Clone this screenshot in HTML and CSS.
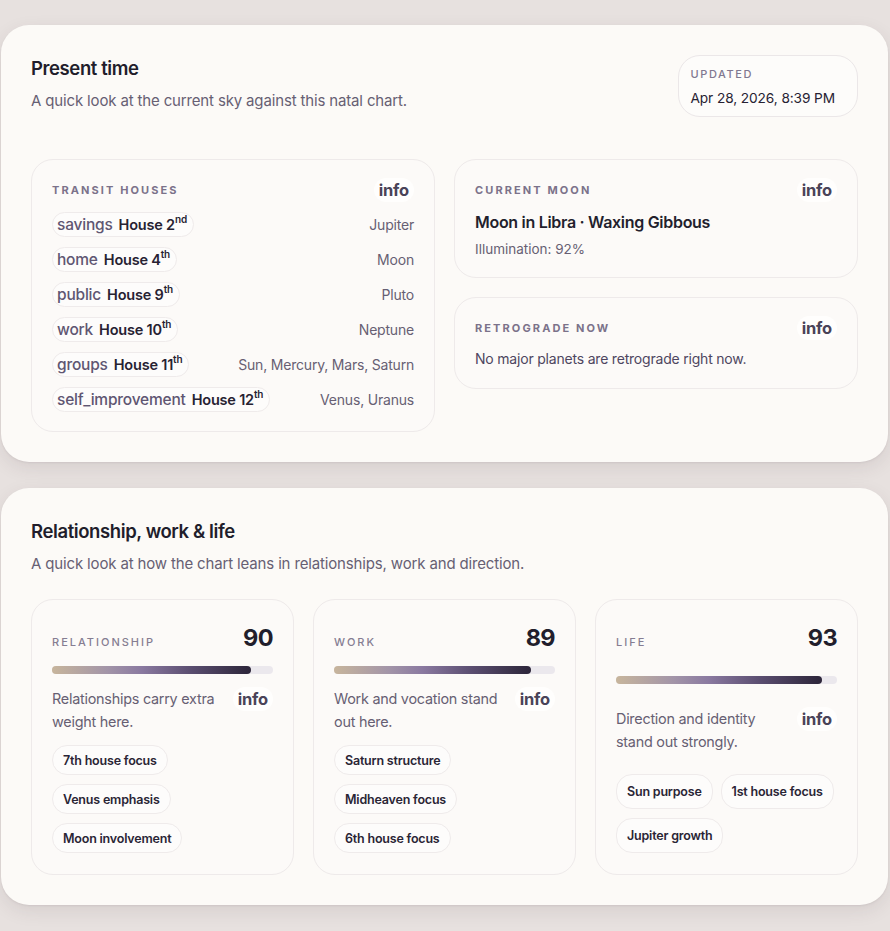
FILE: index.html
```html
<!DOCTYPE html>
<html lang="en">
  <head>
    <meta charset="UTF-8" />
    <meta name="viewport" content="width=device-width, initial-scale=1.0" />
    <title>Present time</title>
    <link rel="stylesheet" href="styles.css">
  </head>
  <body>
    <!-- Present time card -->
    <section class="card">
      <div class="card-head head-now">
        <div>
          <h2>Present time</h2>
          <p class="sub">A quick look at the current sky against this natal chart.</p>
        </div>
        <div class="updated">
          <div class="updated-label">UPDATED</div>
          <div class="updated-date">Apr 28, 2026, 8:39 PM</div>
        </div>
      </div>

      <div class="now-grid">
        <div class="box">
          <div class="box-head">
            <span class="eyebrow strong">TRANSIT HOUSES</span>
            <span class="info">info</span>
          </div>
          <div class="house-list">
            <div class="house-row">
              <span class="house-chip"><span class="theme">savings</span><span class="house">House 2<sup>nd</sup></span></span>
              <span class="planets">Jupiter</span>
            </div>
            <div class="house-row">
              <span class="house-chip"><span class="theme">home</span><span class="house">House 4<sup>th</sup></span></span>
              <span class="planets">Moon</span>
            </div>
            <div class="house-row">
              <span class="house-chip"><span class="theme">public</span><span class="house">House 9<sup>th</sup></span></span>
              <span class="planets">Pluto</span>
            </div>
            <div class="house-row">
              <span class="house-chip"><span class="theme">work</span><span class="house">House 10<sup>th</sup></span></span>
              <span class="planets">Neptune</span>
            </div>
            <div class="house-row">
              <span class="house-chip"><span class="theme">groups</span><span class="house">House 11<sup>th</sup></span></span>
              <span class="planets">Sun, Mercury, Mars, Saturn</span>
            </div>
            <div class="house-row">
              <span class="house-chip"><span class="theme">self_improvement</span><span class="house">House 12<sup>th</sup></span></span>
              <span class="planets">Venus, Uranus</span>
            </div>
          </div>
        </div>

        <div class="side-col">
          <div class="box">
            <div class="box-head">
              <span class="eyebrow strong">CURRENT MOON</span>
              <span class="info">info</span>
            </div>
            <div class="moon-title">Moon in Libra · Waxing Gibbous</div>
            <div class="moon-note">Illumination: 92%</div>
          </div>
          <div class="box">
            <div class="box-head">
              <span class="eyebrow strong">RETROGRADE NOW</span>
              <span class="info">info</span>
            </div>
            <div class="retro-note">No major planets are retrograde right now.</div>
          </div>
        </div>
      </div>
    </section>

    <!-- Relationship, work & life card -->
    <section class="card">
      <div class="card-head">
        <div>
          <h2>Relationship, work &amp; life</h2>
          <p class="sub">A quick look at how the chart leans in relationships, work and direction.</p>
        </div>
      </div>

      <div class="score-grid">
        <div class="box score-box">
          <div class="score-head">
            <span class="eyebrow">RELATIONSHIP</span>
            <span class="score">90</span>
          </div>
          <div class="bar"><div class="bar-fill" style="width: 90%"></div></div>
          <div class="score-text">
            <p>Relationships carry extra weight here.</p>
            <span class="info">info</span>
          </div>
          <div class="tags">
            <span class="tag">7th house focus</span>
            <span class="tag">Venus emphasis</span>
            <span class="tag">Moon involvement</span>
          </div>
        </div>

        <div class="box score-box">
          <div class="score-head">
            <span class="eyebrow">WORK</span>
            <span class="score">89</span>
          </div>
          <div class="bar"><div class="bar-fill" style="width: 89%"></div></div>
          <div class="score-text">
            <p>Work and vocation stand out here.</p>
            <span class="info">info</span>
          </div>
          <div class="tags">
            <span class="tag">Saturn structure</span>
            <span class="tag">Midheaven focus</span>
            <span class="tag">6th house focus</span>
          </div>
        </div>

        <div class="box score-box">
          <div class="score-head">
            <span class="eyebrow">LIFE</span>
            <span class="score">93</span>
          </div>
          <div class="bar"><div class="bar-fill" style="width: 93%"></div></div>
          <div class="score-text">
            <p>Direction and identity stand out strongly.</p>
            <span class="info">info</span>
          </div>
          <div class="tags">
            <span class="tag">Sun purpose</span>
            <span class="tag">1st house focus</span>
            <span class="tag">Jupiter growth</span>
          </div>
        </div>
      </div>
    </section>
  </body>
</html>
```

FILE: styles.css
```css
/* Page */
body {
  margin: 0;
  padding: 25px 2px 0 1px;
  background: #e7e1df;
  font-family: Inter, "Noto Sans", sans-serif;
  color: #272232;
}

/* Big cards */
.card {
  background: #fcfaf7;
  border-radius: 28px;
  padding: 30px;
  margin-bottom: 26px;
  box-shadow: 0 6px 18px rgba(70, 50, 60, 0.10), 0 1px 2px rgba(70, 50, 60, 0.08);
}

.card-head {
  display: flex;
  justify-content: space-between;
  align-items: flex-start;
  margin-bottom: 25px;
}

.head-now {
  margin-bottom: 42px;
}

h2 {
  margin: 0;
  font-size: 18.5px;
  line-height: 26px;
  font-weight: 600;
  letter-spacing: -0.4px;
  color: #211d2b;
}

.sub {
  margin: 10px 0 0;
  font-size: 15px;
  line-height: 20px;
  color: #675f73;
  letter-spacing: -0.15px;
}

/* Updated pill */
.updated {
  border: 1px solid #ebe7e8;
  border-radius: 22px;
  padding: 11px 22px 9px 12px;
  background: #fdfcfa;
}

.updated-label {
  font-size: 11px;
  letter-spacing: 1.6px;
  color: #807890;
  font-weight: 500;
  line-height: 14px;
}

.updated-date {
  margin-top: 8px;
  font-size: 13.7px;
  line-height: 18px;
  color: #272232;
  letter-spacing: -0.1px;
}

/* Inner boxes */
.box {
  border: 1px solid #eeeaea;
  border-radius: 22px;
  background: #fcfaf8;
  padding: 18px 20px 19px 20px;
}

.now-grid {
  display: grid;
  grid-template-columns: 1fr 1fr;
  gap: 19px;
  align-items: start;
}

.side-col {
  display: flex;
  flex-direction: column;
  gap: 19px;
}

.box-head {
  display: flex;
  justify-content: space-between;
  align-items: center;
}

.eyebrow {
  font-size: 11px;
  letter-spacing: 2px;
  color: #857d92;
  font-weight: 500;
}

.eyebrow.strong {
  font-weight: 700;
  letter-spacing: 2.1px;
  color: #7b728a;
}

.info {
  font-size: 16.5px;
  font-weight: 700;
  color: #4a4358;
  background: #fffefd;
  border-radius: 12px;
  padding: 0 5px;
  line-height: 24px;
  letter-spacing: -0.2px;
}

/* Transit list */
.house-list {
  margin-top: 10px;
  display: flex;
  flex-direction: column;
  gap: 10px;
}

.house-row {
  display: flex;
  justify-content: space-between;
  align-items: center;
}

.house-chip {
  display: inline-flex;
  align-items: center;
  gap: 6px;
  height: 23px;
  padding: 0 6px 0 4px;
  border: 1px solid #efebeb;
  border-radius: 13px;
  background: #fdfcfb;
}

.theme {
  font-size: 15.5px;
  font-weight: 500;
  color: #5f5672;
  letter-spacing: -0.2px;
}

.house {
  font-size: 14.5px;
  font-weight: 600;
  color: #272232;
  letter-spacing: -0.2px;
}

.house sup {
  font-size: 10px;
  line-height: 0;
  position: relative;
  top: -1px;
}

.planets {
  font-size: 14px;
  color: #675f73;
  letter-spacing: -0.2px;
}

/* Moon and retrograde */
.moon-title {
  margin-top: 9px;
  font-size: 16px;
  font-weight: 600;
  color: #231f2d;
  letter-spacing: -0.3px;
  line-height: 22px;
}

.moon-note {
  margin-top: 7px;
  font-size: 13.5px;
  color: #675f73;
  line-height: 18px;
}

.retro-note {
  margin-top: 9px;
  font-size: 14px;
  color: #4e4660;
  line-height: 20px;
  letter-spacing: -0.2px;
}

/* Score cards */
.score-grid {
  display: grid;
  grid-template-columns: repeat(3, 1fr);
  gap: 19px;
}

.score-box {
  display: grid;
  row-gap: 13px;
  padding: 23px 20px 21px 20px;
}

.score-head {
  display: flex;
  justify-content: space-between;
  align-items: baseline;
}

.score {
  font-size: 23.5px;
  font-weight: 700;
  color: #221e2c;
  letter-spacing: -0.6px;
  line-height: 30px;
}

.bar {
  height: 8px;
  border-radius: 4px;
  background: #ebe8ed;
}

.bar-fill {
  height: 8px;
  border-radius: 4px;
  background: linear-gradient(90deg, #c7b59c 0%, #a294a8 28%, #8a79a0 45%, #5a4d70 70%, #2c2539 100%);
}

.score-text {
  display: flex;
  justify-content: space-between;
  align-items: flex-start;
  gap: 10px;
}

.score-text p {
  margin: 0;
  font-size: 14.4px;
  line-height: 23px;
  color: #675f73;
  letter-spacing: -0.25px;
}

.tags {
  display: flex;
  flex-wrap: wrap;
  gap: 9px 8px;
  margin-top: -1px;
}

.tag {
  display: inline-flex;
  align-items: center;
  min-height: 28px;
  padding: 0 10px;
  border: 1px solid #efebeb;
  border-radius: 16px;
  background: #fdfcfb;
  font-size: 12.5px;
  font-weight: 600;
  color: #2a2535;
  letter-spacing: -0.2px;
}
```
